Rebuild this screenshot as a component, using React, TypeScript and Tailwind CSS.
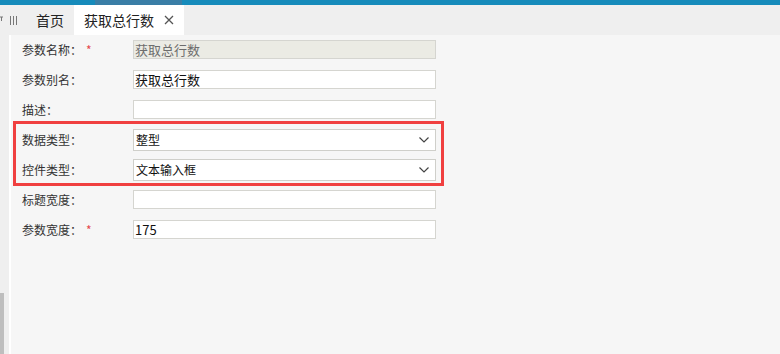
import React from "react";

const FONT = { fontFamily: '"Microsoft YaHei", "Noto Sans CJK SC", "Noto Sans", sans-serif' };

function Chevron() {
  return (
    <svg width="10" height="6" viewBox="0 0 10 6" className="text-[#444]">
      <path d="M0.5 0.5 L5 5 L9.5 0.5" fill="none" stroke="currentColor" strokeWidth="1.2" />
    </svg>
  );
}

function Label({ text, required }: { text: string; required?: boolean }) {
  return (
    <div className="w-[111px] shrink-0 text-[12px] text-[#333] leading-none">
      {text}
      {required && <span className="text-[#e5484d] ml-[4px]">*</span>}
    </div>
  );
}

function InputRow({ label, value, required, disabled }: { label: string; value?: string; required?: boolean; disabled?: boolean }) {
  return (
    <div className="flex items-center pl-[9px]">
      <Label text={label} required={required} />
      <div
        className={`w-[303px] h-[19px] border border-[#d5d5d0] flex items-center px-[1px] text-[13px] leading-none ${
          disabled ? "bg-[#ebebe4] text-[#6d6d6d]" : "bg-white text-[#111]"
        }`}
      >
        {value}
      </div>
    </div>
  );
}

function SelectRow({ label, value }: { label: string; value: string }) {
  return (
    <div className="flex items-center">
      <Label text={label} />
      <div className="w-[303px] h-[22px] border border-[#cfcfca] bg-white flex items-center justify-between pl-[2px] pr-[6px] text-[12px] text-[#111] leading-none">
        <span>{value}</span>
        <Chevron />
      </div>
    </div>
  );
}

export default function App() {
  return (
    <div className="w-[780px] h-[354px] overflow-hidden bg-[#f6f6f6] flex flex-col" style={FONT}>
      {/* top accent bar */}
      <div className="h-[5px] bg-[#168bbb] flex shrink-0">
        <div className="w-[95px]" />
        <div className="w-[87px] bg-[#3a7ea6]" />
      </div>

      {/* tab bar */}
      <div className="h-[30px] bg-[#efefef] flex items-stretch shrink-0">
        <div className="w-[10px] flex items-center">
          <svg width="4" height="10" viewBox="0 0 4 10">
            <path d="M0 2 H3 M1.5 2 V6" stroke="#777" strokeWidth="1" fill="none" />
          </svg>
        </div>
        <div className="w-[26px] flex items-center">
          <svg width="7" height="9" viewBox="0 0 7 9">
            <path d="M0.5 0 V9 M3.5 0 V9 M6.5 0 V9" stroke="#777" strokeWidth="1" />
          </svg>
        </div>
        <div className="flex items-center text-[14px] text-[#222] pr-[10px]">首页</div>
        <div className="bg-white flex items-center pl-[10px] pr-[10px] gap-[10px] w-[110px] text-[14px] text-[#222]">
          <span>获取总行数</span>
          <svg width="10" height="10" viewBox="0 0 10 10">
            <path d="M1 1 L9 9 M9 1 L1 9" stroke="#555" strokeWidth="1.3" />
          </svg>
        </div>
      </div>

      {/* body */}
      <div className="flex-1 flex">
        <div className="w-[9px] bg-[#efefef] flex flex-col justify-end">
          <div className="w-[4px] h-[61px] bg-[#bebebe]" />
        </div>
        <div className="w-[2px] bg-white" />
        <div className="flex-1 pl-[2px] pt-[5px]">
          <div className="w-[431px] flex flex-col">
            <div className="flex flex-col gap-[11px]">
              <InputRow label="参数名称：" value="获取总行数" required disabled />
              <InputRow label="参数别名：" value="获取总行数" />
              <InputRow label="描述：" />
            </div>
            <div className="mt-[2px] border-[3px] border-[#f04040] pl-[6px] pr-[5px] pt-[5px] pb-[2px] flex flex-col gap-[8px]">
              <SelectRow label="数据类型：" value="整型" />
              <SelectRow label="控件类型：" value="文本输入框" />
            </div>
            <div className="mt-[4px] flex flex-col gap-[11px]">
              <InputRow label="标题宽度：" />
              <InputRow label="参数宽度：" value="175" required />
            </div>
          </div>
        </div>
      </div>
    </div>
  );
}
